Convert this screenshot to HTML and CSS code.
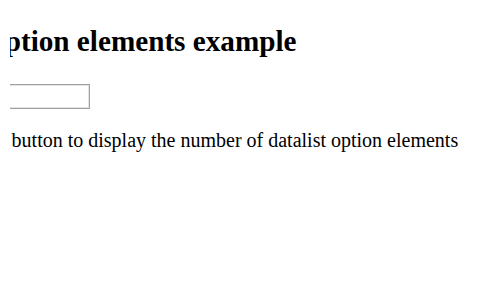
FILE: index.html
```html
<!DOCTYPE html>
<html>
<head>
  <title>Datalist option elements example</title>
  <link rel="stylesheet" href="styles.css">
</head>
<body>
  <div class="page">
    <h2>Datalist option elements example</h2>
    <input class="browser" list="browsers" type="text">
    <datalist id="browsers">
      <option value="Chrome">
      <option value="Firefox">
      <option value="Edge">
      <option value="Safari">
      <option value="Opera">
    </datalist>
    <p>Click the Clear button to display the number of datalist option elements</p>
  </div>
</body>
</html>
```
FILE: styles.css
```css
body {
  font-family: "Liberation Serif", "Times New Roman", serif;
  font-size: 20px;
  margin: 0 10px;
  color: #000000;
  background-color: #ffffff;
}
.page {
  margin-left: -124.5px; /* page is scrolled sideways in the shot */
  white-space: nowrap;
}
h2 {
  font-size: 29.2px;
  margin: 24.6px 0 26.6px;
}
.browser {
  display: block;
  box-sizing: border-box;
  width: 204.5px;
  height: 25px;
  border: 1px solid #a0a0a0;
  box-shadow: inset 0 0 0 1px #e4e4e4;
  padding: 1px 2px;
}
p {
  margin: 19.6px 0;
}
```
